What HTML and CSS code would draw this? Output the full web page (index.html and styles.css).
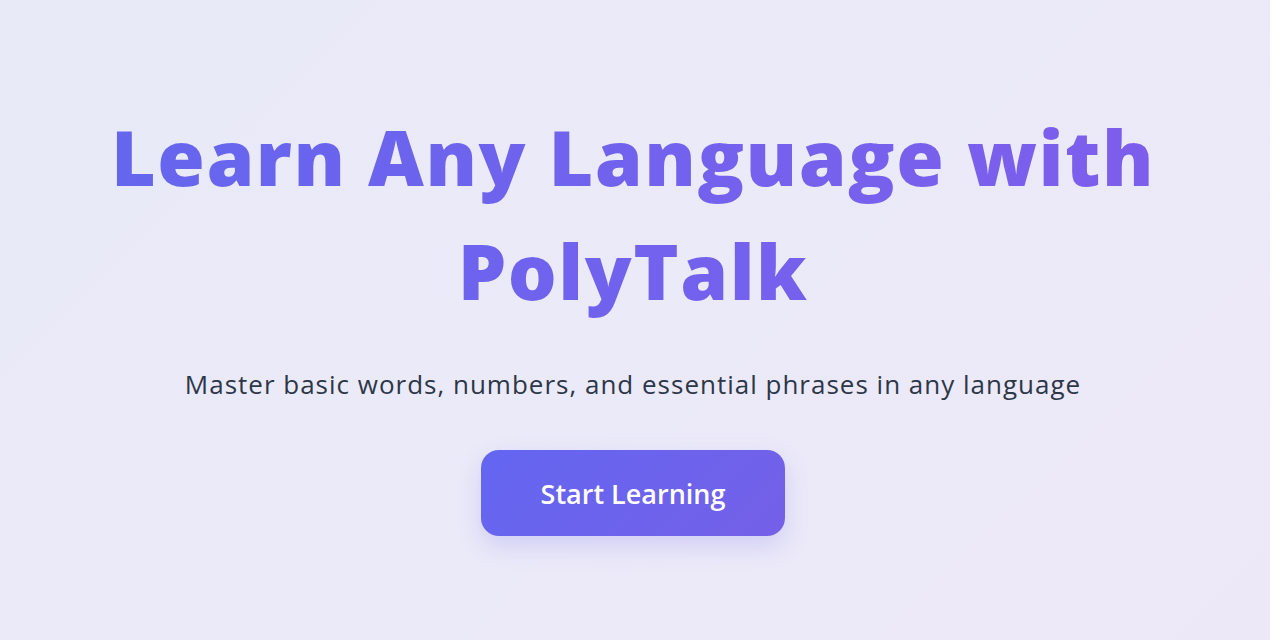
FILE: index.html
```html
<!DOCTYPE html>
<html lang="en">
<head>
<meta charset="utf-8">
<title>PolyTalk</title>
<link rel="stylesheet" href="styles.css">
</head>
<body>
<main class="hero">
  <h1 class="hero-title">Learn Any Language with PolyTalk</h1>
  <p class="hero-subtitle">Master basic words, numbers, and essential phrases in any language</p>
  <button class="hero-button" type="button">Start Learning</button>
</main>
</body>
</html>
```
FILE: styles.css
```css
html, body {
  margin: 0;
  padding: 0;
  background: #ffffff;
}
body {
  font-family: "Open Sans", "Noto Sans", sans-serif;
}
.hero {
  margin-right: 10px;
  height: 640px;
  box-sizing: border-box;
  background: linear-gradient(135deg, #e8eaf7 0%, #ebeaf8 50%, #ede8f8 100%);
  display: flex;
  flex-direction: column;
  align-items: center;
  padding-top: 100px;
  padding-right: 4px;
}
.hero-title {
  margin: 0;
  width: 1070px;
  text-align: center;
  font-size: 77px;
  font-weight: 800;
  line-height: 114px;
  letter-spacing: 1.5px;
  background: linear-gradient(90deg, #6566ee 0%, #7e5eec 100%);
  -webkit-background-clip: text;
  background-clip: text;
  color: transparent;
}
.hero-subtitle {
  margin: 38px 0 0;
  font-size: 26px;
  line-height: 36px;
  letter-spacing: 1px;
  color: #2d3748;
}
.hero-button {
  margin-top: 48px;
  width: 304px;
  height: 86px;
  border: none;
  border-radius: 18px;
  background: linear-gradient(135deg, #6366f1 0%, #7560e8 100%);
  color: #ffffff;
  font-family: "Open Sans", "Noto Sans", sans-serif;
  font-size: 27px;
  font-weight: 600;
  box-shadow: 0 10px 25px rgba(99, 102, 241, 0.2);
  cursor: pointer;
}
```
